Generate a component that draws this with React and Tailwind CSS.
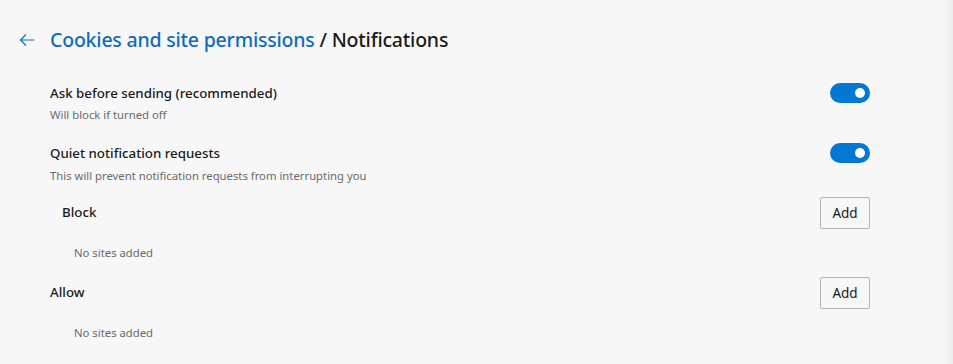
import React from "react";

function Toggle() {
  return (
    <div className="w-[40px] h-[20px] rounded-full bg-[#0078d4] flex items-center justify-end pr-[5px]">
      <div className="w-[10px] h-[10px] rounded-full bg-white" />
    </div>
  );
}

function AddButton() {
  return (
    <button className="w-[50px] h-[32px] border border-[#b3b3b3] rounded-[2px] bg-[#f7f7f7] text-[13.5px] text-[#1a1a1a] flex items-center justify-center">
      Add
    </button>
  );
}

export default function App() {
  return (
    <div
      className="relative w-[953px] h-[364px] bg-[#f7f7f7] overflow-hidden text-[#1a1a1a]"
      style={{ fontFamily: '"Noto Sans", "Segoe UI", sans-serif' }}
    >
      <div className="absolute right-0 top-0 h-full w-[9px] bg-gradient-to-r from-[#f7f7f7] to-[#ececec]" />
      <div className="h-[80px] flex items-center pl-[19px]">
        <svg width="16" height="14" viewBox="0 0 16 14" className="mr-[15px]">
          <path d="M1.5 7 H15.5 M7 1.5 L1.5 7 L7 12.5" stroke="#0078d4" strokeWidth="1.2" fill="none" />
        </svg>
        <h1 className="text-[19.5px] font-medium leading-[28px] tracking-[-0.2px]">
          <span className="text-[#0f6cbd]">Cookies and site permissions</span>
          <span className="text-[#1a1a1a]"> / Notifications</span>
        </h1>
      </div>
      <div className="pl-[50px] w-[870px] pt-[3px]">
        <div className="flex items-start justify-between">
          <div>
            <div className="text-[13.3px] leading-[20px] font-medium">Ask before sending (recommended)</div>
            <div className="text-[11.3px] leading-[16px] mt-[4px] text-[#6b6b6b]">Will block if turned off</div>
          </div>
          <Toggle />
        </div>
        <div className="flex items-start justify-between mt-[20px]">
          <div>
            <div className="text-[13.3px] leading-[20px] font-medium">Quiet notification requests</div>
            <div className="text-[11.3px] leading-[16px] mt-[5px] text-[#6b6b6b]">This will prevent notification requests from interrupting you</div>
          </div>
          <Toggle />
        </div>
        <div className="flex items-center justify-between mt-[13px]">
          <div className="text-[13.3px] font-medium pl-[12px]">Block</div>
          <AddButton />
        </div>
        <div className="text-[11.3px] leading-[16px] mt-[16px] pl-[24px] text-[#6b6b6b]">No sites added</div>
        <div className="flex items-center justify-between mt-[16px]">
          <div className="text-[13.3px] font-medium">Allow</div>
          <AddButton />
        </div>
        <div className="text-[11.3px] leading-[16px] mt-[16px] pl-[24px] text-[#6b6b6b]">No sites added</div>
      </div>
    </div>
  );
}
